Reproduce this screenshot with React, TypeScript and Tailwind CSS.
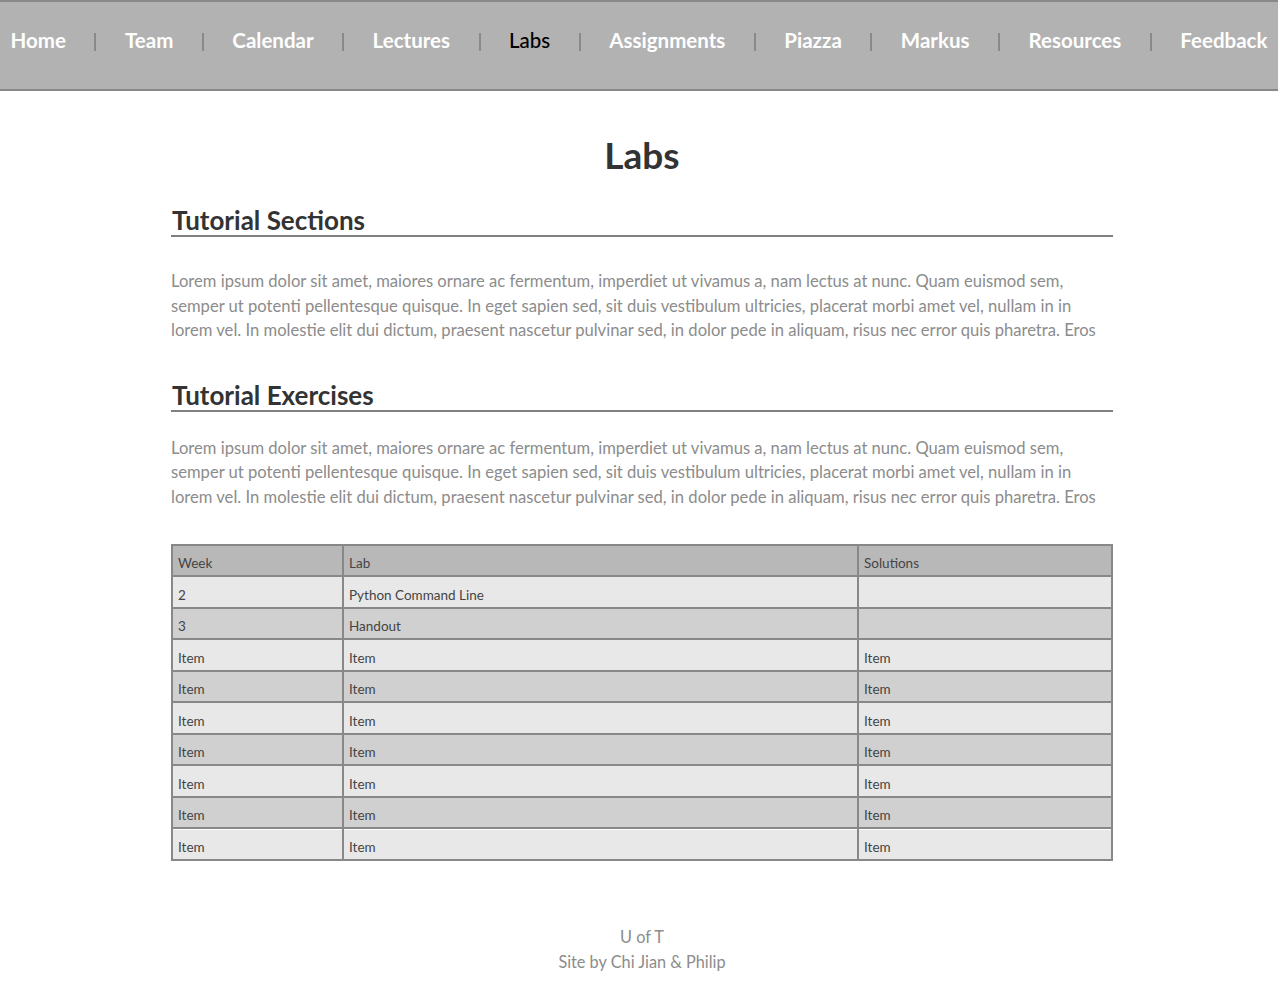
import React from "react";

const navItems = ["Home", "Team", "Calendar", "Lectures", "Labs", "Assignments", "Piazza", "Markus", "Resources", "Feedback"];

// the lines are broken where the original page breaks them
const loremLines = [
  "Lorem ipsum dolor sit amet, maiores ornare ac fermentum, imperdiet ut vivamus a, nam lectus at nunc. Quam euismod sem,",
  "semper ut potenti pellentesque quisque. In eget sapien sed, sit duis vestibulum ultricies, placerat morbi amet vel, nullam in in",
  "lorem vel. In molestie elit dui dictum, praesent nascetur pulvinar sed, in dolor pede in aliquam, risus nec error quis pharetra. Eros",
];

const rows: [string, string, string][] = [
  ["2", "Python Command Line", ""],
  ["3", "Handout", ""],
  ["Item", "Item", "Item"],
  ["Item", "Item", "Item"],
  ["Item", "Item", "Item"],
  ["Item", "Item", "Item"],
  ["Item", "Item", "Item"],
  ["Item", "Item", "Item"],
  ["Item", "Item", "Item"],
];

function Section({ title, gap }: { title: string; gap: string }) {
  return (
    <section>
      <h2 className="text-[26px] font-bold text-[#333] leading-[30px] pl-[1px] border-b-2 border-[#808080]">{title}</h2>
      <p className={"text-[16.6px] leading-[24.5px] text-[#8c8c8c] whitespace-nowrap " + gap}>
        {loremLines.map((l, i) => (
          <span key={i} className="block">
            {l}
          </span>
        ))}
      </p>
    </section>
  );
}

export default function App() {
  return (
    <div className="min-h-screen bg-white" style={{ fontFamily: "Lato, 'Open Sans', sans-serif" }}>
      {/* Top navigation */}
      <nav className="h-[91px] bg-[#b2b2b2] border-t-2 border-b-2 border-[#888] flex items-center justify-center overflow-hidden pb-[10px]">
        {navItems.map((item, i) => (
          <React.Fragment key={item}>
            {i > 0 && <span className="shrink-0 w-[2px] h-[18px] bg-[#8a8a8a] mt-[2px]" />}
            <a
              href="#"
              className={
                "shrink-0 px-[28.5px] text-[20.5px] leading-none " +
                (item === "Labs" ? "text-black font-medium" : "text-white font-bold")
              }
            >
              {item}
            </a>
          </React.Fragment>
        ))}
      </nav>

      <main className="mx-auto w-[948px] pl-[6px]">
        <h1 className="text-center text-[37px] font-bold text-[#333] mt-[42px] leading-[44px]">Labs</h1>

        <div className="mt-[28px]">
          <Section title="Tutorial Sections" gap="mt-[32px]" />
        </div>
        <div className="mt-[37px]">
          <Section title="Tutorial Exercises" gap="mt-[24px]" />
        </div>

        {/* Labs table */}
        <table className="w-full mt-[35px] border-collapse border-2 border-[#888] text-[13.5px] text-[#444] table-fixed">
          <colgroup>
            <col className="w-[171px]" />
            <col className="w-[515px]" />
            <col />
          </colgroup>
          <thead>
            <tr className="bg-[#b8b8b8] h-[31px]">
              <th className="border-2 border-[#888] text-left font-normal pl-[5px] pt-[5px]">Week</th>
              <th className="border-2 border-[#888] text-left font-normal pl-[5px] pt-[5px]">Lab</th>
              <th className="border-2 border-[#888] text-left font-normal pl-[5px] pt-[5px]">Solutions</th>
            </tr>
          </thead>
          <tbody>
            {rows.map((r, i) => (
              <tr key={i} className={(i % 2 === 0 ? "bg-[#e8e8e8]" : "bg-[#d0d0d0]") + " h-[31.5px]"}>
                {r.map((c, j) => (
                  <td
                    key={j}
                    className={
                      "border-2 border-[#888] pl-[5px] pt-[6px] " +
                      (i === rows.length - 1 ? "shadow-[inset_0_1px_0_#fff]" : "")
                    }
                  >
                    {c}
                  </td>
                ))}
              </tr>
            ))}
          </tbody>
        </table>

        <footer className="text-center text-[16.3px] leading-[25px] text-[#8c8c8c] mt-[63px] pb-[16px]">
          <div>U of T</div>
          <div>Site by Chi Jian &amp; Philip</div>
        </footer>
      </main>
    </div>
  );
}
